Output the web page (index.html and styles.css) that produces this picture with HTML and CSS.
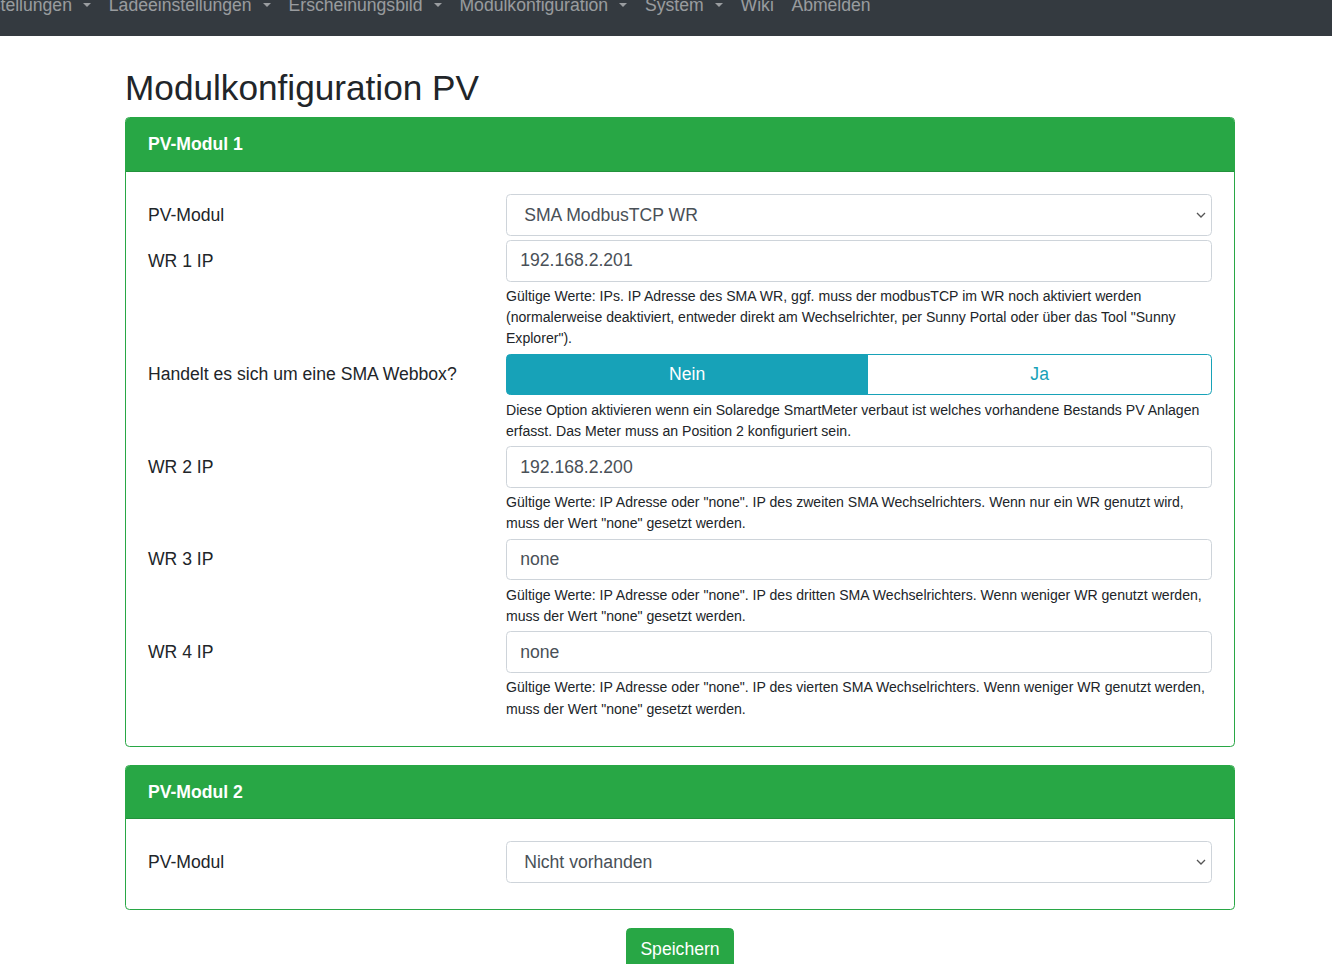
FILE: index.html
```html
<!DOCTYPE html>
<html lang="de">
<head>
<meta charset="utf-8">
<title>Modulkonfiguration PV</title>
<link rel="stylesheet" href="styles.css">
</head>
<body>
<nav class="navbar">
  <ul class="nav-list">
    <li><a class="nav-link dropdown-toggle" href="#">Einstellungen</a></li>
    <li><a class="nav-link dropdown-toggle" href="#">Ladeeinstellungen</a></li>
    <li><a class="nav-link dropdown-toggle" href="#">Erscheinungsbild</a></li>
    <li><a class="nav-link dropdown-toggle" href="#">Modulkonfiguration</a></li>
    <li><a class="nav-link dropdown-toggle" href="#">System</a></li>
    <li><a class="nav-link" href="#">Wiki</a></li>
    <li><a class="nav-link" href="#">Abmelden</a></li>
  </ul>
</nav>

<main class="container">
  <h1 class="page-title">Modulkonfiguration PV</h1>

  <div class="card">
    <div class="card-header">PV-Modul 1</div>
    <div class="card-body">
      <div class="form-row">
        <label class="col-label">PV-Modul</label>
        <div class="col-field">
          <select class="form-control custom-select">
            <option>SMA ModbusTCP WR</option>
          </select>
        </div>
      </div>
      <div class="form-row">
        <label class="col-label">WR 1 IP</label>
        <div class="col-field">
          <input class="form-control" type="text" value="192.168.2.201">
          <small class="form-text">Gültige Werte: IPs. IP Adresse des SMA WR, ggf. muss der modbusTCP im WR noch aktiviert werden (normalerweise deaktiviert, entweder direkt am Wechselrichter, per Sunny Portal oder über das Tool "Sunny Explorer").</small>
        </div>
      </div>
      <div class="form-row">
        <label class="col-label">Handelt es sich um eine SMA Webbox?</label>
        <div class="col-field">
          <div class="btn-group">
            <button class="btn btn-toggle active" type="button">Nein</button>
            <button class="btn btn-toggle" type="button">Ja</button>
          </div>
          <small class="form-text">Diese Option aktivieren wenn ein Solaredge SmartMeter verbaut ist welches vorhandene Bestands PV Anlagen erfasst. Das Meter muss an Position 2 konfiguriert sein.</small>
        </div>
      </div>
      <div class="form-row">
        <label class="col-label">WR 2 IP</label>
        <div class="col-field">
          <input class="form-control" type="text" value="192.168.2.200">
          <small class="form-text">Gültige Werte: IP Adresse oder "none". IP des zweiten SMA Wechselrichters. Wenn nur ein WR genutzt wird, muss der Wert "none" gesetzt werden.</small>
        </div>
      </div>
      <div class="form-row">
        <label class="col-label">WR 3 IP</label>
        <div class="col-field">
          <input class="form-control" type="text" value="none">
          <small class="form-text">Gültige Werte: IP Adresse oder "none". IP des dritten SMA Wechselrichters. Wenn weniger WR genutzt werden, muss der Wert "none" gesetzt werden.</small>
        </div>
      </div>
      <div class="form-row">
        <label class="col-label">WR 4 IP</label>
        <div class="col-field">
          <input class="form-control" type="text" value="none">
          <small class="form-text">Gültige Werte: IP Adresse oder "none". IP des vierten SMA Wechselrichters. Wenn weniger WR genutzt werden, muss der Wert "none" gesetzt werden.</small>
        </div>
      </div>
    </div>
  </div>

  <div class="card">
    <div class="card-header">PV-Modul 2</div>
    <div class="card-body">
      <div class="form-row">
        <label class="col-label">PV-Modul</label>
        <div class="col-field">
          <select class="form-control custom-select">
            <option>Nicht vorhanden</option>
          </select>
        </div>
      </div>
    </div>
  </div>

  <div class="actions">
    <button class="btn btn-success" type="submit">Speichern</button>
  </div>
</main>
</body>
</html>
```

FILE: styles.css
```css
* { box-sizing: border-box; }

html { font-size: 17.6px; }

body {
  margin: 0;
  font-family: "Liberation Sans", Arial, Helvetica, sans-serif;
  font-size: 1rem;
  line-height: 1.5;
  color: #212529;
  background: #fff;
}

/* navbar (page is scrolled, only lower part visible) */
.navbar {
  height: 36px;
  overflow: hidden;
  background: #343a40;
  display: flex;
  align-items: flex-end;
  padding-bottom: 0.5rem;
}

.nav-list {
  list-style: none;
  margin: 0 0 0 -42.5px;
  padding: 0;
  display: flex;
  flex-shrink: 0;
}

.nav-link {
  display: block;
  padding: 0.5rem;
  font-size: 1rem;
  line-height: 26.4px;
  color: rgba(255, 255, 255, 0.5);
  text-decoration: none;
  white-space: nowrap;
}

.dropdown-toggle::after {
  content: "";
  display: inline-block;
  margin-left: 11.3px;
  vertical-align: 0.255em;
  border-top: 0.28em solid;
  border-right: 0.28em solid transparent;
  border-left: 0.28em solid transparent;
  border-bottom: 0;
}

/* main */
.container {
  width: 1110px;
  margin-left: 125px;
  padding-top: 31px;
}

.page-title {
  margin: 0 0 8px 0;
  font-size: 2rem;
  font-weight: 400;
  line-height: 1.2;
  color: #212529;
}

.card {
  border: 1px solid #28a745;
  border-radius: 0.25rem;
  margin-bottom: 1rem;
  overflow: hidden;
}

.card-header {
  background: #28a745;
  color: #fff;
  font-weight: 700;
  padding: 0.75rem 1.25rem;
  border-bottom: 1px solid rgba(0, 0, 0, 0.125);
}

.card-body {
  padding: 1.25rem;
}

.form-row {
  display: flex;
  margin: 0 -5px 0.25rem -5px;
}

.col-label {
  flex: 0 0 33.3333%;
  max-width: 33.3333%;
  padding: calc(0.375rem + 1px) 5px;
  line-height: 1.5;
}

.col-field {
  flex: 0 0 66.6667%;
  max-width: 66.6667%;
  padding: 0 5px;
}

.form-control {
  display: block;
  width: 100%;
  height: calc(1.5em + 0.75rem + 2px);
  padding: 0.375rem 0.75rem;
  font-family: inherit;
  font-size: 1rem;
  line-height: 1.5;
  color: #495057;
  background-color: #fff;
  border: 1px solid #ced4da;
  border-radius: 0.25rem;
  margin: 0;
}

.custom-select {
  -webkit-appearance: none;
  appearance: none;
  padding-left: calc(0.75rem + 4px);
  padding-right: 2rem;
  background-image: url("data:image/svg+xml;utf8,<svg xmlns='http://www.w3.org/2000/svg' width='10' height='6' viewBox='0 0 10 6'><path d='M1 1l4 4 4-4' fill='none' stroke='%23555' stroke-width='1.3'/></svg>");
  background-repeat: no-repeat;
  background-position: right 5px center;
  background-size: 10px 6px;
}

.form-text {
  display: block;
  margin-top: 0.25rem;
  font-size: 80%;
  line-height: 1.5;
  color: #212529;
}

.btn {
  display: inline-block;
  font-family: inherit;
  font-size: 1rem;
  line-height: 1.5;
  padding: 0.375rem 0.75rem;
  border: 1px solid transparent;
  border-radius: 0.25rem;
  text-align: center;
  cursor: pointer;
  margin: 0;
}

.btn-group {
  display: flex;
  width: 100%;
}

.btn-toggle {
  flex: 1 1 auto;
  color: #17a2b8;
  background: transparent;
  border-color: #17a2b8;
}

.btn-toggle:first-child {
  border-top-right-radius: 0;
  border-bottom-right-radius: 0;
}

.btn-toggle:last-child {
  border-top-left-radius: 0;
  border-bottom-left-radius: 0;
  margin-left: -1px;
}

.btn-toggle.active {
  color: #fff;
  background: #17a2b8;
}

.actions {
  display: flex;
  justify-content: center;
}

.btn-success {
  color: #fff;
  background: #28a745;
  border-color: #28a745;
}
```
